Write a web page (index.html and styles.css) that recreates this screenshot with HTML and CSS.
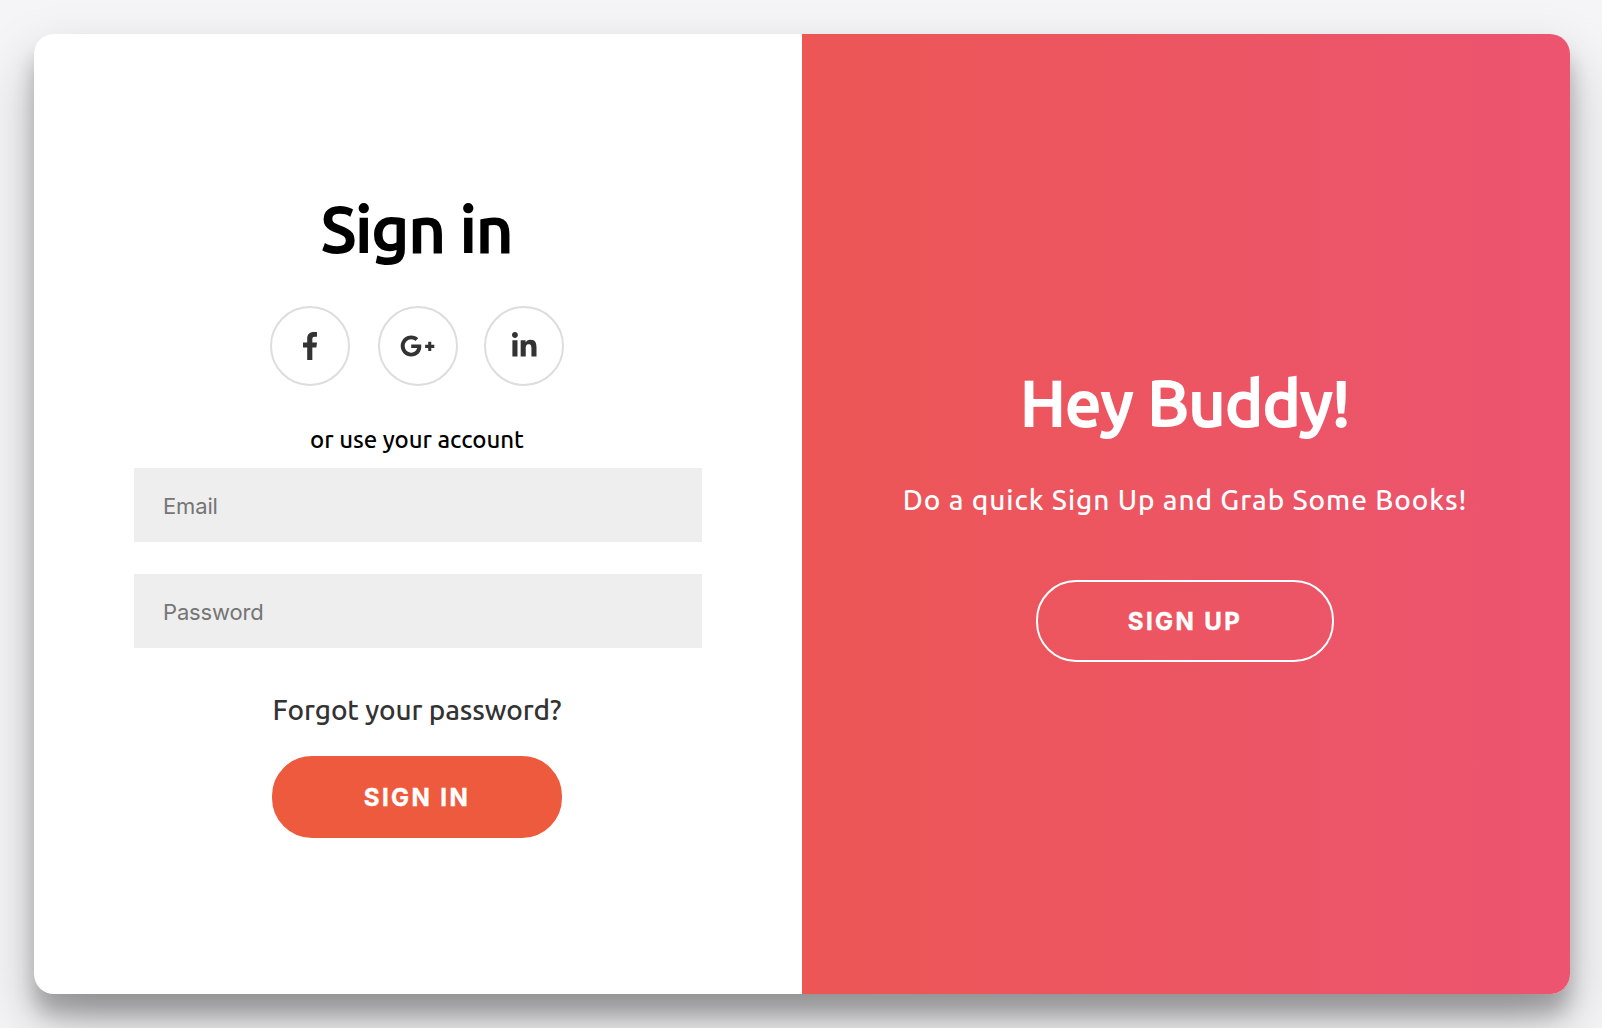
FILE: index.html
```html
<!DOCTYPE html>
<html lang="en">
<head>
<meta charset="utf-8">
<title>Sign in</title>
<link rel="stylesheet" href="styles.css">
</head>
<body>
<main class="card">
  <form class="sign-in">
    <h1 class="title">Sign in</h1>
    <div class="social">
      <a class="social-link" aria-label="Facebook"><svg width="14.44" height="28" viewBox="0 0 264 512"><path d="M215.8 85H264V3.6C255.7 2.5 227.1 0 193.8 0 124.3 0 76.7 42.4 76.7 120.3V192H0v91h76.7v229h94V283h73.6l11.7-91h-85.3v-62.7c0-26.3 7.3-44.3 45.1-44.3z"/></svg></a>
      <a class="social-link google" aria-label="Google Plus"><svg width="35" height="28" viewBox="0 0 640 512"><path d="M386.061 228.496c1.834 9.692 3.143 19.384 3.143 31.956C389.204 370.205 315.599 448 204.8 448c-106.084 0-192-85.915-192-192s85.916-192 192-192c51.864 0 95.083 18.859 128.611 50.292l-52.126 50.03c-14.145-13.621-39.028-29.599-76.485-29.599-65.484 0-118.92 54.221-118.92 121.277 0 67.056 53.436 121.277 118.92 121.277 75.961 0 104.513-54.745 108.965-82.773H204.8v-66.009h181.261zm185.406 6.437V179.2h-56.001v55.733h-55.733v56.001h55.733v55.733h56.001v-55.733H627.2v-56.001h-55.733z"/></svg></a>
      <a class="social-link linkedin" aria-label="LinkedIn"><svg width="24.5" height="28" viewBox="0 32 448 512"><path d="M100.3 480H7.4V180.9h92.9V480zM53.8 140.1C24.1 140.1 0 115.5 0 85.8 0 56.1 24.1 32 53.8 32c29.7 0 53.8 24.1 53.8 53.8 0 29.7-24.1 54.3-53.8 54.3zM448 480h-92.7V334.4c0-34.7-.7-79.2-48.3-79.2-48.3 0-55.7 37.7-55.7 76.7V480h-92.8V180.9h89.1v40.8h1.3c12.4-23.5 42.7-48.3 87.9-48.3 94 0 111.3 61.9 111.3 142.3V480z"/></svg></a>
    </div>
    <span class="hint">or use your account</span>
    <input class="field" type="email" placeholder="Email" aria-label="Email">
    <input class="field" type="password" placeholder="Password" aria-label="Password">
    <a class="forgot">Forgot your password?</a>
    <button class="button primary" type="button">SIGN IN</button>
  </form>
  <section class="welcome">
    <h2 class="title">Hey Buddy!</h2>
    <p class="lead">Do a quick Sign Up and Grab Some Books!</p>
    <button class="button ghost" type="button">SIGN UP</button>
  </section>
</main>
</body>
</html>
```

FILE: styles.css
```css
* { box-sizing: border-box; }

body {
  margin: 0;
  height: 1028px;
  padding: 34px 32px 34px 34px;
  overflow: hidden;
  background: #f5f4f7;
  font-family: Ubuntu, "Noto Sans", sans-serif;
}

.card {
  display: grid;
  grid-template-columns: 1fr 1fr;
  height: 960px;
  overflow: hidden;
  border-radius: 20px;
  background: #fff;
  box-shadow: 0 28px 56px rgba(0, 0, 0, .25), 0 20px 20px rgba(0, 0, 0, .22);
}

.sign-in,
.welcome {
  display: flex;
  flex-direction: column;
  align-items: center;
}

.sign-in { padding: 153px 101px 0 99px; }

.title {
  margin: 0;
  font-size: 64px;
  font-weight: 500;
  line-height: 82px;
  letter-spacing: -.3px;
  white-space: nowrap;
  -webkit-text-stroke: 2px currentColor;
}

.social {
  display: flex;
  width: 294px;
  margin-top: 37px;
}

.social-link {
  display: flex;
  align-items: center;
  justify-content: center;
  width: 80px;
  height: 80px;
  border: 2px solid #ddd;
  border-radius: 50%;
  fill: #333;
}

.google { margin: 0 26px 0 28px; }
.google svg { margin-left: -2px; }
.linkedin svg { margin-left: 1px; }

.hint {
  margin-top: 38px;
  font-size: 24px;
  font-weight: 500;
  line-height: 32px;
  letter-spacing: -.05px;
  white-space: nowrap;
}

.field {
  width: 568px;
  height: 74px;
  margin: 12px -1px 20px 1px;
  padding: 2px 29px 0;
  border: 0;
  border-radius: 0;
  background: #eee;
  font: 22px Inter, sans-serif;
  letter-spacing: -.15px;
}

.field + .field { margin-bottom: 42px; }

.field::placeholder { color: #757575; opacity: 1; }

.forgot {
  color: #333;
  font-size: 28px;
  font-weight: 500;
  line-height: 40px;
  letter-spacing: -.12px;
  white-space: nowrap;
}

.button {
  height: 82px;
  padding: 0;
  border: 2px solid #ee5a3d;
  border-radius: 40px;
  color: #fff;
  font: bold 24px Inter, sans-serif;
  letter-spacing: 2.4px;
  -webkit-text-stroke: .4px #fff;
}

.primary {
  width: 290px;
  margin-top: 26px;
  background: #ee5a3d;
}

.welcome {
  padding: 327px 2px 0 0;
  background: linear-gradient(to right, #ed5655, #ec5470);
  color: #fff;
}

.lead {
  margin: 37px 0 0;
  font-size: 28px;
  font-weight: 500;
  line-height: 40px;
  letter-spacing: .9px;
  white-space: nowrap;
}

.ghost {
  width: 298px;
  margin-top: 60px;
  border-color: #fff;
  background: transparent;
}
```
